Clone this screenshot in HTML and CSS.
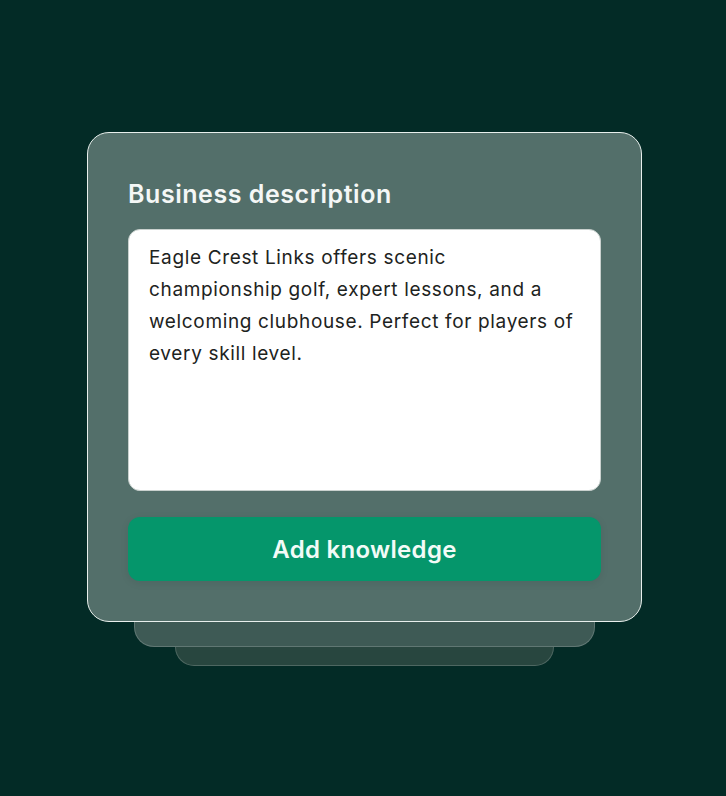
FILE: index.html
```html
<!DOCTYPE html>
<html>
<head>
<meta charset="utf-8">
<link rel="stylesheet" href="styles.css">
</head>
<body>
<div class="stage">
  <div class="card">
    <h2 class="title">Business description</h2>
    <div class="textbox">Eagle Crest Links offers scenic championship golf, expert lessons, and a welcoming clubhouse. Perfect for players of every skill level.</div>
    <button class="btn">Add knowledge</button>
  </div>
  <div class="back back1"></div>
  <div class="back back2"></div>
</div>
</body>
</html>
```
FILE: styles.css
```css
html, body {
  margin: 0;
  padding: 0;
  background: #032b26;
  width: 726px;
  height: 796px;
  overflow: hidden;
  font-family: Inter, "Noto Sans", sans-serif;
}
.stage {
  padding-top: 132px;
  padding-left: 3px;
  display: flex;
  flex-direction: column;
  align-items: center;
}
.card {
  box-sizing: border-box;
  width: 555px;
  background: #536f6a;
  border: 1.5px solid #e8efec;
  border-radius: 22px;
  padding: 46px 40px 40px 40px;
  display: flex;
  flex-direction: column;
  position: relative;
  z-index: 2;
}
.title {
  margin: 0;
  font-size: 25px;
  line-height: 30px;
  font-weight: 600;
  color: #f4f7f6;
  letter-spacing: 0.55px;
}
.textbox {
  box-sizing: border-box;
  margin-top: 20px;
  height: 262px;
  background: #ffffff;
  border: 1px solid #c9d1ce;
  border-radius: 12px;
  padding: 12px 18px 0 20px;
  font-size: 19px;
  line-height: 32px;
  letter-spacing: 0.65px;
  color: #1d2321;
}
.btn {
  margin-top: 26px;
  height: 64px;
  border: none;
  border-radius: 12px;
  background: #05966b;
  color: #f2fbf7;
  font-family: Inter, "Noto Sans", sans-serif;
  font-size: 24px;
  font-weight: 600;
  letter-spacing: 0.3px;
  box-shadow: 0 2px 8px rgba(0,0,0,0.08);
}
.back {
  box-sizing: border-box;
  border: 1px solid rgba(255,255,255,0.18);
  border-top: none;
  border-radius: 0 0 20px 20px;
}
.back1 {
  width: 461px;
  height: 25px;
  background: #3e5a55;
  z-index: 1;
}
.back2 {
  width: 379px;
  height: 19px;
  background: #28463f;
}
```
